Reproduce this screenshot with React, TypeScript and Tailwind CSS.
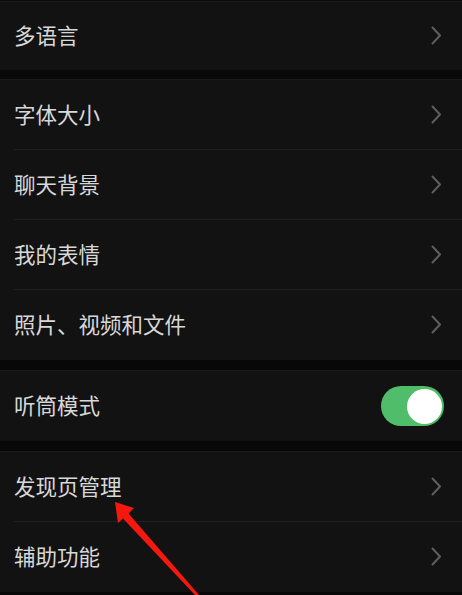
import React from "react";

const Chevron = () => (
  <svg width="11" height="19" viewBox="0 0 11 19" fill="none" className="mr-[20px] mb-[2px]">
    <path d="M1.5 1.5 L9 9.5 L1.5 17.5" stroke="#5e5e5e" strokeWidth="2" strokeLinecap="round" strokeLinejoin="round" />
  </svg>
);

const Row = ({
  label,
  last = false,
  right,
  h = "h-[70px]",
}: {
  label: string;
  last?: boolean;
  right?: React.ReactNode;
  h?: string;
}) => (
  <div className={`relative ${h} flex items-center justify-between bg-[#121212]`}>
    <span className="pl-[14px] pb-[3px] text-[21.5px] text-[#d8d8d8] leading-none">{label}</span>
    {right ?? <Chevron />}
    {!last && <div className="absolute left-[14px] right-0 bottom-0 h-px bg-[#1f1f1f]" />}
  </div>
);

const Gap = ({ h = "h-[11px]" }: { h?: string }) => (
  <div className={`${h} bg-[#080808] border-b border-[#1a1a1a]`} />
);

const Toggle = () => (
  <div className="mr-[18px] w-[63px] h-[40px] rounded-full bg-[#4fbd69] flex items-center justify-end pr-[2px]">
    <div className="w-[35px] h-[35px] rounded-full bg-white" />
  </div>
);

export default function App() {
  return (
    <div
      className="relative w-[462px] h-[595px] overflow-hidden bg-[#080808]"
      style={{ fontFamily: '"Noto Sans CJK SC", "Noto Sans", sans-serif' }}
    >
      <div className="h-[2px] bg-[#0b0b0b] border-b border-[#1a1a1a]" />
      <Row label="多语言" last h="h-[68px]" />
      <Gap h="h-[10px]" />
      <Row label="字体大小" />
      <Row label="聊天背景" />
      <Row label="我的表情" />
      <Row label="照片、视频和文件" last />
      <Gap />
      <Row label="听筒模式" last right={<Toggle />} />
      <Gap />
      <Row label="发现页管理" />
      <Row label="辅助功能" last />
      <svg className="absolute left-0 top-0" width="462" height="595" viewBox="0 0 462 595">
        <polygon
          points="115,502 134,508 128.5,513.5 199,595 195,595 123,518.5 118,523"
          fill="#f5180f"
        />
      </svg>
    </div>
  );
}
